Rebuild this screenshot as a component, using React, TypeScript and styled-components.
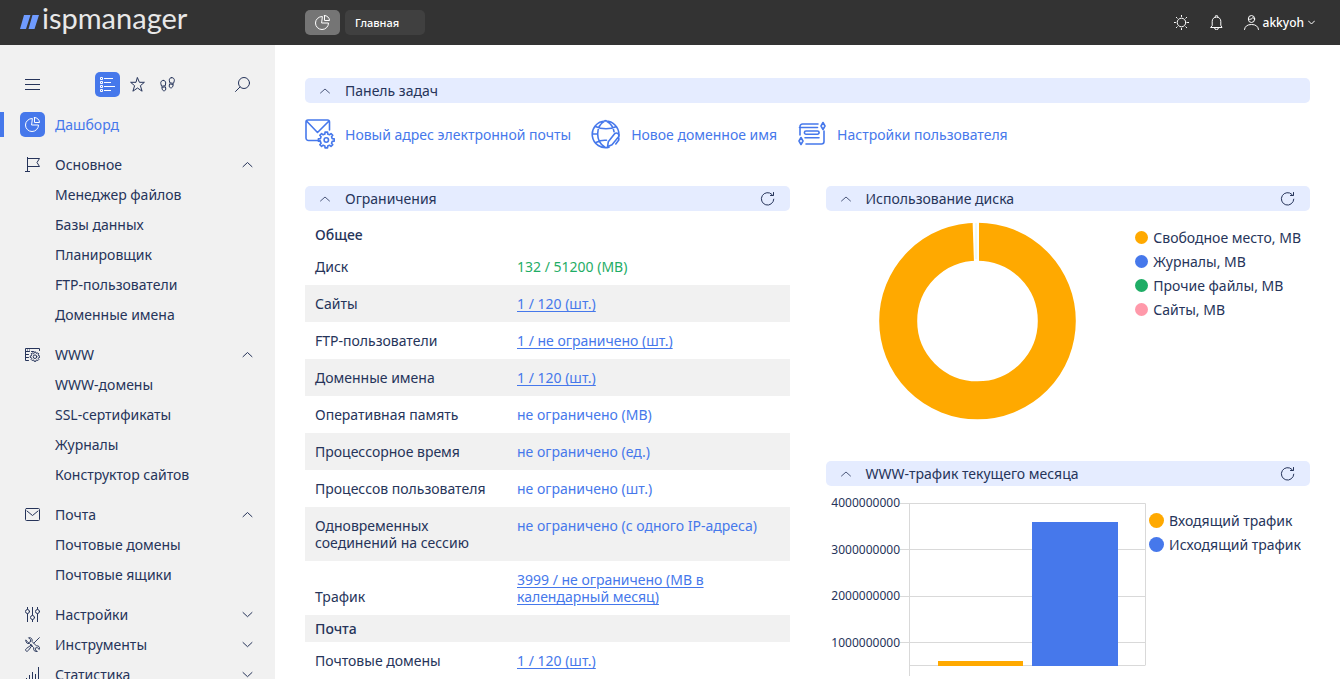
import React from 'react';
import styled, { createGlobalStyle, css } from 'styled-components';

const c = {
  navy: '#26345a',
  blue: '#4678eb',
  pale: '#e5ecff',
  grey: '#f1f1f1',
  dark: '#333333',
  green: '#1fad66',
  orange: '#ffa900',
  pink: '#ff99aa',
};

const Global = createGlobalStyle`
  * { box-sizing: border-box; }
  body { margin: 0; font-family: 'Noto Sans', 'Open Sans', sans-serif; font-size: 14px; line-height: 17px; color: ${c.navy}; background: #fff; }
  button { font: inherit; color: inherit; background: none; border: 0; padding: 0; cursor: pointer; }
  a { color: inherit; text-decoration: none; }
  ul { list-style: none; margin: 0; padding: 0; }
  svg { display: block; flex: none; }
`;

const Shell = styled.div`
  display: flex;
  flex-direction: column;
  height: 100vh;
`;

const Header = styled.header`
  display: flex;
  align-items: center;
  height: 45px;
  flex: none;
  background: ${c.dark};
  color: #fff;
`;

const Brand = styled.a`
  display: flex;
  align-items: baseline;
  gap: 3px;
  width: 305px;
  padding: 0 0 10px 20px;
  font-family: Lato, sans-serif;
  font-size: 29px;
  line-height: 35px;
  color: #e8e8e8;
`;

const HomeTab = styled.button`
  display: flex;
  align-items: center;
  justify-content: center;
  width: 35px;
  height: 25px;
  border-radius: 5px;
  background: #757575;
`;

const Tab = styled.button`
  width: 80px;
  height: 25px;
  margin-left: 5px;
  padding-left: 10px;
  border-radius: 5px;
  background: #404040;
  text-align: left;
  font-size: 11px;
  font-weight: 500;
`;

const Tools = styled.div`
  display: flex;
  align-items: center;
  gap: 20px;
  margin-left: auto;
  padding-right: 25px;
`;

const UserButton = styled.button`
  display: flex;
  align-items: center;
  gap: 4px;
  font-size: 12px;
  font-weight: 500;
`;

const Body = styled.div`
  display: flex;
  flex: 1;
  min-height: 0;
`;

const pane = css`
  overflow-y: auto;
  scrollbar-width: none;
`;

const Sidebar = styled.nav`
  ${pane}
  width: 275px;
  flex: none;
  padding-top: 27px;
  background: ${c.grey};
`;

const SideTools = styled.div`
  display: flex;
  align-items: center;
  justify-content: space-between;
  height: 25px;
  margin-bottom: 15px;
  padding: 0 25px;
`;

const ModeSwitch = styled.div`
  display: flex;
  gap: 5px;
`;

const Tile = styled.span<{ $active?: boolean }>`
  display: flex;
  align-items: center;
  justify-content: center;
  width: 25px;
  height: 25px;
  flex: none;
  border-radius: 5px;
  background: ${(p) => (p.$active ? c.blue : 'transparent')};
  color: ${(p) => (p.$active ? '#fff' : 'inherit')};
`;

const Group = styled.section`
  padding-bottom: 10px;
`;

const NavRow = styled.button`
  display: flex;
  align-items: center;
  gap: 10px;
  width: 100%;
  height: 30px;
  padding: 0 20px 1px;
  text-align: left;
  & > :last-child { margin-left: auto; }
`;

const Current = styled.a`
  display: flex;
  align-items: center;
  gap: 10px;
  height: 25px;
  margin-bottom: 13px;
  padding-left: 16px;
  border-left: 4px solid ${c.blue};
  color: ${c.blue};
`;

const SubLink = styled.a`
  display: block;
  padding-left: 55px;
  line-height: 30px;
`;

const Main = styled.main`
  ${pane}
  flex: 1;
  min-width: 0;
  padding: 33px 30px;
`;

const Bar = styled.header`
  display: flex;
  align-items: center;
  height: 25px;
  padding: 0 15px;
  border-radius: 5px;
  background: ${c.pale};
`;

const BarTitle = styled.h2`
  flex: 1;
  margin: 0 0 0 14px;
  font-size: 14px;
  font-weight: 400;
`;

const Tasks = styled.div`
  display: flex;
  flex-wrap: wrap;
  gap: 20px;
  padding: 16px 0 37px;
  color: ${c.blue};
`;

const Task = styled.a`
  display: flex;
  align-items: center;
  gap: 10px;
`;

const Columns = styled.div`
  display: grid;
  grid-template-columns: minmax(0, 1fr) minmax(0, 1fr);
  gap: 36px;
`;

const Limits = styled.table`
  width: 100%;
  margin-top: 10px;
  border-collapse: collapse;
  table-layout: fixed;
  tr:nth-child(odd):not(:first-child) { background: ${c.grey}; }
`;

const LabelCell = styled.th<{ $low?: boolean }>`
  padding: 10px;
  text-align: left;
  font-weight: 400;
  vertical-align: ${(p) => (p.$low ? 'bottom' : 'top')};
`;

const SectionCell = styled.th`
  padding: 5px 10px;
  text-align: left;
  font-weight: 500;
`;

const ValueCell = styled.td<{ $ok?: boolean }>`
  padding: 10px;
  vertical-align: top;
  color: ${(p) => (p.$ok ? c.green : c.blue)};
  a { text-decoration: underline; text-underline-offset: 2px; }
`;

const Widget = styled.section<{ $tall?: boolean }>`
  min-height: ${(p) => (p.$tall ? '275px' : '0')};
`;

const ChartRow = styled.div`
  display: flex;
  align-items: flex-start;
`;

const ChartArea = styled.div`
  display: flex;
  flex: 1;
  justify-content: center;
`;

const Legend = styled.ul<{ $low?: boolean }>`
  padding: ${(p) => (p.$low ? '22px 9px 0 3px' : '14px 9px 0 7px')};
`;

const LegendItem = styled.li<{ $color: string; $dot: number }>`
  display: flex;
  align-items: center;
  gap: 5px;
  height: 24px;
  white-space: nowrap;
  &::before {
    content: '';
    width: ${(p) => p.$dot}px;
    height: ${(p) => p.$dot}px;
    border-radius: 50%;
    background: ${(p) => p.$color};
  }
`;

type IconProps = { d: React.ReactNode; size?: number; box?: number; w?: number };
const Icon = ({ d, size = 15, box = size, w = 1 }: IconProps) => (
  <svg width={size} height={size} viewBox={`0 0 ${box} ${box}`} fill="none" stroke="currentColor" strokeWidth={w} strokeLinecap="round" strokeLinejoin="round" aria-hidden="true">
    {d}
  </svg>
);

const gear = (x: number, y: number, r: number, teeth: number, depth: number) => {
  const pts: string[] = [];
  for (let i = 0; i < teeth; i++) {
    [[-0.3, r - depth], [-0.2, r], [0.2, r], [0.3, r - depth]].forEach(([o, q]) => {
      const a = ((i + o) / teeth) * Math.PI * 2;
      pts.push(`${(x + q * Math.sin(a)).toFixed(2)} ${(y - q * Math.cos(a)).toFixed(2)}`);
    });
  }
  return `M${pts.join('L')}Z`;
};

const art = {
  pie: <path d="M7 1.500A6.500 6.500 0 1 0 13.500 8H7zM9.500.5V5.500h5A5 5 0 0 0 9.500.5z" />,
  sun: <><circle cx="7.500" cy="7.500" r="4.300" /><path d="M7.500.2v1.300M7.500 13.500v1.300M.2 7.500h1.300M13.500 7.500h1.300M2.300 2.300l.9.900M11.800 11.800l.9.900M2.300 12.700l.9-.9M11.800 3.200l.9-.9" /></>,
  bell: <path d="M2 12.500h11L11.800 10.300V6.300A4.200 4.200 0 0 0 3.200 6.300V10.300zM6.300 2.200V1.600a1.200 1.200 0 0 1 2.400 0v.6M5.500 12.700a2 2 0 0 0 4 0" />,
  user: <><ellipse cx="7.500" cy="4" rx="3.200" ry="3.500" /><path d="M4.500 4.200c2 .5 3.800-.3 4.400-1.700.3.700.9 1.200 1.700 1.400M.5 14.500c.4-3.300 2.900-5 7-5s6.600 1.700 7 5" /></>,
  menu: <path d="M0 2.500h15M0 7.500h15M0 12.500h15" strokeLinecap="butt" />,
  list: <path d="M.5.5h2v2h-2zM.5 4.500h2v2h-2zM.5 8.500h2v2h-2zM.5 12.500h2v2h-2zM4 1.500h9M4 5.500h7M4 9.500h11M4 13.500h7" strokeLinecap="butt" />,
  star: <path d="M7.500.8l1.900 4.500h5L10.400 8.700l1.700 5.500L7.500 11l-4.600 3.200L4.600 8.700.6 5.300h5z" />,
  feet: <><path d="M3.300 3.400C1.500 3.400.5 4.800.8 6.600l.8 2.700 3.700-.6.4-2.700c.1-1.500-.9-2.600-2.400-2.600zM1.900 10.800l.5 2c.8 1.700 3.500 1.100 3.400-.8l-.3-1.800z" /><path d="M11.700.6c1.900 0 2.900 1.400 2.600 3.200l-.8 2.600-3.700-.6-.5-2.600C9.200 1.700 10.200.6 11.700.6zM13.200 7.900l-.6 2c-.8 1.700-3.400 1.100-3.400-.8l.3-1.800z" /></>,
  search: <><circle cx="9" cy="6" r="5.500" /><path d="M5 10L.5 14.500" /></>,
  flag: <path d="M2.500 0v14.500M0 14.500h5M2.500 1.500H14.500L12 5.500l2.500 4H2.500" strokeLinecap="butt" />,
  web: <><path d="M14.500 3.500v-2h-14v12h3M.5 4.500h4M.5 7.500h3M.5 10.500h3M2.500 3h.1M4.500 3h.1M6.500 4.500h2" /><path d={gear(10, 9.7, 4.8, 8, 1)} /><circle cx="10" cy="9.700" r="1.800" /></>,
  mail: <path d="M1.500 1.500h12a1 1 0 0 1 1 1v10a1 1 0 0 1-1 1h-12a1 1 0 0 1-1-1v-10a1 1 0 0 1 1-1zM2 4L7.500 8.500 13 4" />,
  sliders: <><circle cx="2.500" cy="4.500" r="2" /><circle cx="7.500" cy="10.500" r="2" /><circle cx="12.500" cy="4.500" r="2" /><path d="M2.500 0V2.500M2.500 6.500V15M7.500 0V8.500M7.500 12.500V15M12.500 0V2.500M12.500 6.500V15" strokeLinecap="butt" /></>,
  tools: <path d="M1 3.500L3.500 6 5.800 5.200 6 3 3.800.8C6.500.2 8.300 2.200 7.500 4.800l4.700 4.700c2.300-.6 4 1.300 3 3.800L13 11.200l-2.100.7.3 2.300 2 1.200c-3 .6-4.700-1.500-3.900-4L4.800 6.900C2.500 7.500.5 6 1 3.500zM15.300.7l-5.800 5.800M7.500 9l-3.800 5.200c-1.800 2.500-4.600-.2-2.100-2L7 8.300" />,
  stats: <path d="M1.500 11v4M4.500 8v7M7.500 5v10M10.500 7v8M13.500 0v15" strokeLinecap="butt" />,
  up: <path d="M3 9.700L7.500 5.500 12 9.700" />,
  down: <path d="M3 5.500L7.500 9.700 12 5.500" />,
  refresh: <path d="M13.800 8.200A6.200 6.200 0 1 1 12 3.500L13 4.500M13.500 1.500v3H10.500" />,
  mailGear: <><path d="M15 21.500H3.500A2.500 2.500 0 0 1 1 19V3a2 2 0 0 1 2-2H22.500a2 2 0 0 1 2 2V11M2 2.500L12.500 13.500 23.500 2.500" /><path d={gear(21.3, 21, 8, 8, 1.9)} /><circle cx="21.300" cy="21" r="2.200" /></>,
  globe: <><path d="M18 28.200A13.300 13.300 0 1 1 27.800 16.500M14 28.300C4 22 4.500 7 14 1.700M15 1.700c5 2.800 7.500 6.800 8 11M4.500 7.500c6 3 15 3 21 0M1.500 15H6M5 23.500c3-1.700 7-2.500 10.500-2.200" /><path d="M16.500 27.800l.8-5 6.500-8.300c2-1.300 4.700.4 4.200 2.800l-7 8.500zM27.800 18.500V21l-3 4" /></>,
  settings: <><path d="M3 16V7.500A2.500 2.500 0 0 1 5.500 5H21M2.500 8.500H20.500M27 12V22.500A2.500 2.500 0 0 1 24.500 25H9" /><path d="M9 12H20.500a1.500 1.500 0 0 1 0 3.200H9a1.500 1.500 0 0 1 0-3.200zM8 18.700H22M26 3.500l2 3.500-2 3.500-2-3.500zM4 18.500l2 3.500-2 3.500-2-3.500z" /></>,
};

const Chevron = ({ open }: { open?: boolean }) => <Icon d={open ? art.up : art.down} />;

const groups = [
  { title: 'Основное', icon: art.flag, items: ['Менеджер файлов', 'Базы данных', 'Планировщик', 'FTP-пользователи', 'Доменные имена'] },
  { title: 'WWW', icon: art.web, items: ['WWW-домены', 'SSL-сертификаты', 'Журналы', 'Конструктор сайтов'] },
  { title: 'Почта', icon: art.mail, items: ['Почтовые домены', 'Почтовые ящики'] },
];

const closedGroups = [
  { title: 'Настройки', icon: art.sliders, box: 15 },
  { title: 'Инструменты', icon: art.tools, box: 16 },
  { title: 'Статистика', icon: art.stats, box: 15 },
];

type Limit = { label: string; value?: string; kind?: 'ok' | 'link'; low?: boolean };
const limits: Limit[] = [
  { label: 'Общее' },
  { label: 'Диск', value: '132 / 51200 (MB)', kind: 'ok' },
  { label: 'Сайты', value: '1 / 120 (шт.)', kind: 'link' },
  { label: 'FTP-пользователи', value: '1 / не ограничено (шт.)', kind: 'link' },
  { label: 'Доменные имена', value: '1 / 120 (шт.)', kind: 'link' },
  { label: 'Оперативная память', value: 'не ограничено (MB)' },
  { label: 'Процессорное время', value: 'не ограничено (ед.)' },
  { label: 'Процессов пользователя', value: 'не ограничено (шт.)' },
  { label: 'Одновременных соединений на сессию', value: 'не ограничено (с одного IP-адреса)' },
  { label: 'Трафик', value: '3999 / не ограничено (MB в календарный месяц)', kind: 'link', low: true },
  { label: 'Почта' },
  { label: 'Почтовые домены', value: '1 / 120 (шт.)', kind: 'link' },
];

const Panel = ({ title, refresh }: { title: string; refresh?: boolean }) => (
  <Bar>
    <button aria-label="Свернуть"><Icon size={11} w={0.8} d={<path d="M.5 8L5 4l4.500 4" />} /></button>
    <BarTitle>{title}</BarTitle>
    {refresh && <button aria-label="Обновить"><Icon d={art.refresh} /></button>}
  </Bar>
);

const Donut = () => (
  <svg width="198" height="220" viewBox="0 0 198 220" role="img" aria-label="Использование диска">
    <circle cx="99.500" cy="110" r="79.300" fill="none" stroke={c.orange} strokeWidth="38" />
    <path d="M94.500 8H101v44H96z" fill="#fff" />
    <path d="M98 12v36" stroke="#dff3e8" />
  </svg>
);

const TrafficChart = () => (
  <svg width="320" height="220" viewBox="0 0 320 220" role="img" aria-label="WWW-трафик текущего месяца" fontSize="12" fill={c.navy}>
    <path d="M74 17.500H319.500V179.500M74 63.500H319M74 110.500H319M74 156.500H319M83 179.500H319M83.500 17V190" fill="none" stroke="#d9d9d9" />
    {[4, 3, 2, 1].map((n, i) => (
      <text key={n} x="74" y={[21, 68, 114, 161][i]} textAnchor="end">{n}000000000</text>
    ))}
    <rect x="112" y="175" width="85" height="5" fill={c.orange} />
    <rect x="206" y="36" width="86" height="144" fill={c.blue} />
  </svg>
);

export default function App() {
  return (
    <Shell>
      <Global />
      <Header>
        <Brand href="#">
          <svg width="19" height="14" viewBox="0 0 19 14" fill="#6f9bff" aria-hidden="true">
            <path d="M4 0H10.500L6 14H0zM12.500 0H19L14.500 14H8.500z" />
          </svg>
          ispmanager
        </Brand>
        <HomeTab aria-label="Дашборд"><Icon d={art.pie} /></HomeTab>
        <Tab>Главная</Tab>
        <Tools>
          <button aria-label="Тема"><Icon d={art.sun} /></button>
          <button aria-label="Уведомления"><Icon d={art.bell} /></button>
          <UserButton>
            <Icon d={art.user} />
            akkyoh
            <Icon size={7} d={<path d="M.5 2l3 3 3-3" />} />
          </UserButton>
        </Tools>
      </Header>
      <Body>
        <Sidebar>
          <SideTools>
            <button aria-label="Меню"><Icon d={art.menu} /></button>
            <ModeSwitch>
              <button aria-label="Список"><Tile $active><Icon d={art.list} /></Tile></button>
              <button aria-label="Избранное"><Tile><Icon d={art.star} /></Tile></button>
              <button aria-label="История"><Tile><Icon d={art.feet} /></Tile></button>
            </ModeSwitch>
            <button aria-label="Поиск"><Icon d={art.search} /></button>
          </SideTools>
          <Current href="#">
            <Tile $active><Icon d={art.pie} /></Tile>
            Дашборд
          </Current>
          {groups.map((g) => (
            <Group key={g.title}>
              <NavRow aria-expanded="true">
                <Tile><Icon d={g.icon} /></Tile>
                {g.title}
                <Chevron open />
              </NavRow>
              <ul>
                {g.items.map((item) => (
                  <li key={item}><SubLink href="#">{item}</SubLink></li>
                ))}
              </ul>
            </Group>
          ))}
          {closedGroups.map((g) => (
            <NavRow key={g.title} aria-expanded="false">
              <Tile><Icon d={g.icon} box={g.box} /></Tile>
              {g.title}
              <Chevron />
            </NavRow>
          ))}
        </Sidebar>
        <Main>
          <Panel title="Панель задач" />
          <Tasks>
            <Task href="#"><Icon size={30} w={1.6} d={art.mailGear} />Новый адрес электронной почты</Task>
            <Task href="#"><Icon size={30} w={1.6} d={art.globe} />Новое доменное имя</Task>
            <Task href="#"><Icon size={30} w={1.6} d={art.settings} />Настройки пользователя</Task>
          </Tasks>
          <Columns>
            <section>
              <Panel title="Ограничения" refresh />
              <Limits>
                <colgroup><col width="202" /><col /></colgroup>
                <tbody>
                  {limits.map((l, i) =>
                    l.value ? (
                      <tr key={i}>
                        <LabelCell scope="row" $low={l.low}>{l.label}</LabelCell>
                        <ValueCell $ok={l.kind === 'ok'}>
                          {l.kind === 'link' ? <a href="#">{l.value}</a> : l.value}
                        </ValueCell>
                      </tr>
                    ) : (
                      <tr key={i}><SectionCell colSpan={2} scope="colgroup">{l.label}</SectionCell></tr>
                    ),
                  )}
                </tbody>
              </Limits>
            </section>
            <div>
              <Widget $tall>
                <Panel title="Использование диска" refresh />
                <ChartRow>
                  <ChartArea><Donut /></ChartArea>
                  <Legend>
                    <LegendItem $dot={13} $color={c.orange}>Свободное место, MB</LegendItem>
                    <LegendItem $dot={13} $color={c.blue}>Журналы, MB</LegendItem>
                    <LegendItem $dot={13} $color={c.green}>Прочие файлы, MB</LegendItem>
                    <LegendItem $dot={13} $color={c.pink}>Сайты, MB</LegendItem>
                  </Legend>
                </ChartRow>
              </Widget>
              <Widget>
                <Panel title="WWW-трафик текущего месяца" refresh />
                <ChartRow>
                  <ChartArea><TrafficChart /></ChartArea>
                  <Legend $low>
                    <LegendItem $dot={15} $color={c.orange}>Входящий трафик</LegendItem>
                    <LegendItem $dot={15} $color={c.blue}>Исходящий трафик</LegendItem>
                  </Legend>
                </ChartRow>
              </Widget>
            </div>
          </Columns>
        </Main>
      </Body>
    </Shell>
  );
}
